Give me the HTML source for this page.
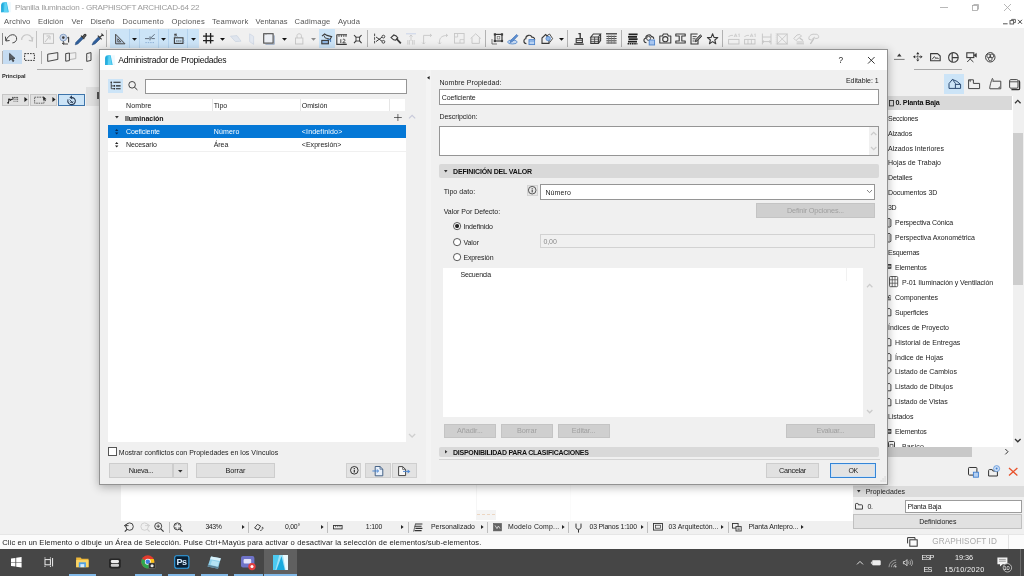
<!DOCTYPE html>
<html><head><meta charset="utf-8">
<style>
*{box-sizing:border-box;margin:0;padding:0}
html,body{width:1024px;height:576px;overflow:hidden;background:#f0f0f0}
body{font-family:"Liberation Sans",sans-serif;font-size:7px;color:#1c1c1c;position:relative}
#w{position:absolute;left:0;top:0;width:1024px;height:576px;will-change:transform}
.a{position:absolute}
.t{position:absolute;white-space:nowrap;line-height:1}
svg{position:absolute;overflow:visible;fill:none;stroke:#3c3c3c;stroke-width:1}
</style></head><body><div id="w">
<div class="a" style="left:0px;top:0px;width:1024px;height:28px;background:#fff;"></div>
<svg style="left:1.3px;top:2.4px;" width="10.3" height="10.3" viewBox="0 0 10 10"><path d="M.3 10V2.6C.3 1 1.4 .2 3 .2H9.8V10Z" fill="#eef9fe" stroke="none"/><path d="M.3 10V2.6C.3 1 1.4 .2 3 .2H5.6L7.6 10Z" fill="#2fb8e6" stroke="none"/><path d="M3.4 1L5.2 .6L6.8 10H2.8Z" fill="#5fd2f3" stroke="none"/><path d="M.3 10V3L1.6 1L1.2 10Z" fill="#1b9fd3" stroke="none"/></svg>
<div class="t" style="left:15.00px;top:3.74px;font-size:8.1px;letter-spacing:-0.242px;color:#9b9b9b;">Planilla Iluminacion - GRAPHISOFT ARCHICAD-64 22</div>
<svg style="left:940px;top:7px;" width="8" height="1" viewBox="0 0 8 1"><path d="M0 .5H8" stroke="#a6a6a6" stroke-width=".8"/></svg>
<svg style="left:972px;top:3.5px;" width="7" height="7" viewBox="0 0 7 7"><rect x=".5" y="1.5" width="5" height="5" stroke="#a6a6a6" stroke-width=".8"/><path d="M1.8 1.5V.5H6.5V5.2H5.5" stroke="#a6a6a6" stroke-width=".8"/></svg>
<svg style="left:1003.5px;top:3.5px;" width="7" height="7" viewBox="0 0 7 7"><path d="M0 0L7 7M7 0L0 7" stroke="#a6a6a6" stroke-width=".8"/></svg>
<div class="t" style="left:4.00px;top:18.07px;font-size:7.6px;letter-spacing:0.166px;color:#565656;">Archivo</div>
<div class="t" style="left:38.00px;top:18.07px;font-size:7.6px;letter-spacing:0.082px;color:#565656;">Edición</div>
<div class="t" style="left:71.50px;top:18.07px;font-size:7.6px;letter-spacing:0.031px;color:#565656;">Ver</div>
<div class="t" style="left:90.50px;top:18.07px;font-size:7.6px;letter-spacing:0.057px;color:#565656;">Diseño</div>
<div class="t" style="left:122.50px;top:18.07px;font-size:7.6px;letter-spacing:0.293px;color:#565656;">Documento</div>
<div class="t" style="left:171.50px;top:18.07px;font-size:7.6px;letter-spacing:0.174px;color:#565656;">Opciones</div>
<div class="t" style="left:212.00px;top:18.07px;font-size:7.6px;letter-spacing:0.234px;color:#565656;">Teamwork</div>
<div class="t" style="left:255.50px;top:18.07px;font-size:7.6px;letter-spacing:0.038px;color:#565656;">Ventanas</div>
<div class="t" style="left:294.50px;top:18.07px;font-size:7.6px;letter-spacing:0.170px;color:#565656;">Cadimage</div>
<div class="t" style="left:338.00px;top:18.07px;font-size:7.6px;letter-spacing:0.118px;color:#565656;">Ayuda</div>
<svg style="left:1002.5px;top:19px;" width="20" height="6" viewBox="0 0 20 6"><path d="M0 4.8H4.6" stroke="#555" stroke-width="1"/><rect x="7" y="1.6" width="3.6" height="3.4" stroke="#555" stroke-width=".9"/><path d="M8.6 1.4V.4H12.4V3.6H10.8" stroke="#555" stroke-width=".9"/><path d="M15 .8L19 4.8M19 .8L15 4.8" stroke="#444" stroke-width="1"/></svg>
<div class="a" style="left:2.1px;top:33px;width:0.8px;height:11.6px;background:#8a8a8a;"></div>
<svg style="left:5px;top:33px;" width="12" height="11" viewBox="0 0 12 11"><path d="M1 7.8C2 4.4 4.5 1.9 7.5 1.7C10.5 1.6 12 4 11.6 6.4C11.2 8.4 9.6 9.7 7.4 9.9" stroke="#444" stroke-width="1"/><path d="M0.4 3.6L0.9 8L4.6 7.5" stroke="#444" stroke-width="1"/></svg>
<svg style="left:21.3px;top:33px;" width="12" height="11" viewBox="0 0 12 11"><path d="M0.7 7C0.4 3.6 3.6 1.5 6.4 1.7C9.4 1.9 11 4.6 11.3 7.6" stroke="#c6c6c6" stroke-width="1.1"/><path d="M11.8 4L11.4 8L7.8 7.4" stroke="#c6c6c6" stroke-width="1.1"/></svg>
<div class="a" style="left:36.4px;top:30.5px;width:1.1px;height:17px;background:#c2c2c2;"></div>
<svg style="left:42.5px;top:33px;" width="11" height="11" viewBox="0 0 11 11"><rect x=".5" y=".8" width="10" height="9.6" stroke="#c2c2c2"/><path d="M2 9L6 4M3.5 3H7V6.5" stroke="#c2c2c2"/></svg>
<svg style="left:59px;top:32.5px;" width="12" height="12" viewBox="0 0 12 12"><circle cx="4.3" cy="4.6" r="3.4" stroke="#8aa4c8" fill="#c9d6ea"/><circle cx="4.3" cy="4.6" r="1.3" fill="#3a3a3a" stroke="none"/><path d="M4.3 8V11H9M3 10L4.3 11.2L5.6 10" stroke="#3a3a3a" stroke-width=".9"/><path d="M9.6 4.2V9.5M8.4 5.2L9.6 4" stroke="#3a3a3a" stroke-width="1.1"/></svg>
<svg style="left:74px;top:32.5px;" width="13" height="13" viewBox="0 0 13 13"><path d="M1.2 11.8L2 9.2L7.6 3.6L9.4 5.4L3.8 11Z" fill="#2f5f9c" stroke="#274b7c" stroke-width=".6"/><path d="M7 2.6L10.4 6M8.4 4.2L10.6 1.6C11.4 1 12.4 2 11.6 2.8L9.6 5" stroke="#3a3a3a" stroke-width="1.3"/></svg>
<svg style="left:90.5px;top:32.5px;" width="13" height="13" viewBox="0 0 13 13"><path d="M1 12L2.4 9L7.8 3.6L9.6 5.4L4.2 10.8Z" fill="#2f5f9c" stroke="#274b7c" stroke-width=".6"/><path d="M6.8 2.6L10.6 6.4M8.8 4.4L11.6 1.6M10.4 .6L12.6 2.8" stroke="#3a3a3a" stroke-width="1.2"/></svg>
<div class="a" style="left:106.0px;top:30px;width:1px;height:17px;background:#b2b2b2;"></div>
<div class="a" style="left:110.25px;top:29.25px;width:88.5px;height:18.5px;background:#cce4f7;"></div>
<div class="a" style="left:129.0px;top:29.25px;width:0.8px;height:18.5px;background:#b4d3ee;"></div>
<div class="a" style="left:139.35px;top:29.25px;width:0.8px;height:18.5px;background:#b4d3ee;"></div>
<div class="a" style="left:158.1px;top:29.25px;width:0.8px;height:18.5px;background:#b4d3ee;"></div>
<div class="a" style="left:168.1px;top:29.25px;width:0.8px;height:18.5px;background:#b4d3ee;"></div>
<div class="a" style="left:187.1px;top:29.25px;width:0.8px;height:18.5px;background:#b4d3ee;"></div>
<svg style="left:114px;top:33px;" width="12" height="12" viewBox="0 0 12 12"><path d="M1.6 1.2V10.8H11Z" stroke="#4a4a4a" stroke-width="1" fill="#b4c8de"/><path d="M3.8 5.8V8.8H6.8Z" stroke="#3a3a3a" stroke-width=".8" fill="#cce4f7"/></svg>
<svg style="left:132.0px;top:37.8px;" width="5" height="3" viewBox="0 0 5 3"><path d="M0 0H5L2.5 2.8Z" fill="#111" stroke="none"/></svg>
<svg style="left:144px;top:33px;" width="12" height="12" viewBox="0 0 12 12"><path d="M1 5.6H5M6.2 5.6L10.6 1.2M6 3.4V7.4M7.4 5.6H10.8" stroke="#54606e" stroke-width=".9"/><path d="M1.4 9.6H10.6" stroke="#8fb0d6" stroke-width="1" stroke-dasharray="1.4 1"/></svg>
<svg style="left:161.1px;top:37.8px;" width="5" height="3" viewBox="0 0 5 3"><path d="M0 0H5L2.5 2.8Z" fill="#111" stroke="none"/></svg>
<svg style="left:173px;top:33px;" width="13" height="12" viewBox="0 0 13 12"><rect x="1.4" y="4.8" width="8.6" height="5.6" stroke="#3a3a3a" stroke-width="1.1"/><path d="M2 1.2L4 3.4M2 1V3.6M1.4 1.2H4" stroke="#3a3a3a" stroke-width=".9"/><path d="M3.2 8H8.4" stroke="#3a3a3a" stroke-width="1.2" stroke-dasharray="1.3 .7"/><path d="M10.8 7V10.4" stroke="#7d9cc4" stroke-width=".9" stroke-dasharray="1 .8"/></svg>
<svg style="left:190.5px;top:37.8px;" width="5" height="3" viewBox="0 0 5 3"><path d="M0 0H5L2.5 2.8Z" fill="#111" stroke="none"/></svg>
<svg style="left:203px;top:33.4px;" width="10.6" height="10.6" viewBox="0 0 10.6 10.6"><path d="M3.2 0V10.6M7.6 0V10.6M0 3.2H10.6M0 7.6H10.6" stroke="#1e1e1e" stroke-width="1.3"/></svg>
<svg style="left:220.0px;top:37.8px;" width="5" height="3" viewBox="0 0 5 3"><path d="M0 0H5L2.5 2.8Z" fill="#111" stroke="none"/></svg>
<svg style="left:229.75px;top:35px;" width="12" height="8" viewBox="0 0 12 8"><path d="M.5 1.2L7 .6L11 6.2L5.4 6.6Z" fill="#dfe5ee" stroke="#c9d2e0" stroke-width=".7"/></svg>
<svg style="left:249px;top:32.5px;" width="6" height="12" viewBox="0 0 6 12"><path d="M.6 .8L4.6 3.4V11.4L.6 8.6Z" fill="#e3e8f0" stroke="#ccd4e2" stroke-width=".7"/></svg>
<svg style="left:263.25px;top:33px;" width="12" height="12" viewBox="0 0 12 12"><path d="M2.4 11.3H11.3V2.4" stroke="#93a6c4" stroke-width=".9"/><rect x=".7" y=".7" width="9.4" height="9.4" stroke="#4c4c4c" stroke-width="1.1" fill="#eceff4"/><path d="M1.4 2.6V1.4H4" stroke="#9a9a9a" stroke-width=".6"/></svg>
<svg style="left:281.5px;top:37.8px;" width="5" height="3" viewBox="0 0 5 3"><path d="M0 0H5L2.5 2.8Z" fill="#111" stroke="none"/></svg>
<svg style="left:295px;top:33.2px;" width="8.4" height="11.6" viewBox="0 0 8.4 11.6"><rect x=".5" y="5" width="7.4" height="6" stroke="#c4c4c4" stroke-width=".9"/><path d="M2 5V2.6C2 .2 6.4 .2 6.4 2.6V5" stroke="#c4c4c4" stroke-width=".9"/></svg>
<svg style="left:310.8px;top:37.8px;" width="5" height="3" viewBox="0 0 5 3"><path d="M0 0H5L2.5 2.8Z" fill="#8c8c8c" stroke="none"/></svg>
<div class="a" style="left:318.5px;top:29.25px;width:16px;height:18.5px;background:#cce4f7;"></div>
<svg style="left:320.6px;top:33.2px;" width="11.5" height="11.5" viewBox="0 0 11.5 11.5"><path d="M1 3.2L3.6 1L6 2.4L10.6 3.6L8.6 7.2" stroke="#3a3a3a" stroke-width="1.1"/><path d="M3 2.6L4.2 5L8.4 6" stroke="#3a3a3a" stroke-width=".9"/><rect x=".8" y="7.4" width="6.6" height="3.4" stroke="#3a3a3a" stroke-width="1.1" fill="#8db4e0"/><path d="M6.4 6.4H9.6V9" stroke="#3f6fae" stroke-width=".9"/></svg>
<svg style="left:336.25px;top:33.5px;" width="11.5" height="11" viewBox="0 0 11.5 11"><path d="M.6 .8H11M.8 .8V10.4H10.8" stroke="#3a3a3a" stroke-width="1.1"/><path d="M3 .8V3M5.4 .8V3M7.8 .8V3M10 .8V3" stroke="#3a3a3a" stroke-width=".8"/><path d="M4.8 5.2V9M6.8 5.6C8 4.6 9.6 5.6 8.6 6.8L6.8 8.8H9.6" stroke="#3a3a3a" stroke-width=".9"/></svg>
<svg style="left:354.4px;top:34.6px;" width="7.6" height="8.2" viewBox="0 0 7.6 8.2"><rect x="2" y="2.2" width="3.6" height="3.8" stroke="#3a3a3a" stroke-width=".9"/><path d="M0 0L2 2.2M7.6 0L5.6 2.2M0 8.2L2 6M7.6 8.2L5.6 6" stroke="#3a3a3a" stroke-width="1.1"/></svg>
<div class="a" style="left:367.0px;top:30px;width:1px;height:17.200000000000003px;background:#b2b2b2;"></div>
<svg style="left:373.75px;top:33px;" width="11.5" height="12" viewBox="0 0 11.5 12"><path d="M.6 .6V11.4" stroke="#3a3a3a" stroke-width=".9" stroke-dasharray="2.6 1"/><path d="M2 4L8 8.2M2 8.6L8 4.2" stroke="#3a3a3a" stroke-width="1"/><circle cx="9.4" cy="3.6" r="1.4" stroke="#3a3a3a" stroke-width=".9"/><circle cx="9.4" cy="8.8" r="1.4" stroke="#3a3a3a" stroke-width=".9"/></svg>
<svg style="left:389.75px;top:33px;" width="11.5" height="12" viewBox="0 0 11.5 12"><path d="M1 4.6L3.8 2L6.2 3L7.8 5L5.6 7.2L3.6 6.8Z" stroke="#3a3a3a" stroke-width="1.1"/><path d="M6.4 5.6L10.8 10.4" stroke="#3a3a3a" stroke-width="1.7"/></svg>
<svg style="left:406.25px;top:33px;" width="10" height="12" viewBox="0 0 10 12"><path d="M0 .8H10" stroke="#c9d3e8" stroke-width="1"/><path d="M5 2V8M3.4 3.6L5 2L6.6 3.6M1.8 7V11.6M3.4 7V11.6M6.6 7V11.6M8.2 7V11.6" stroke="#c6c6c6" stroke-width=".8"/></svg>
<svg style="left:421.9px;top:33px;" width="10" height="12" viewBox="0 0 10 12"><path d="M1.6 11V2.4H9.4M8 1L9.6 2.4L8 3.8M.2 9.6L1.6 11L3 9.6" stroke="#c6c6c6" stroke-width=".9"/></svg>
<svg style="left:437.5px;top:33px;" width="10" height="12" viewBox="0 0 10 12"><path d="M1.6 11V8C1.6 4.6 4.6 2.4 9.4 2.4M8 1L9.6 2.4L8 3.8M.2 9.6L1.6 11L3 9.6" stroke="#c6c6c6" stroke-width=".9"/></svg>
<svg style="left:454.4px;top:33.4px;" width="10.6" height="10.6" viewBox="0 0 10.6 10.6"><rect x=".5" y=".5" width="9.6" height="9.6" stroke="#c6c6c6" stroke-width=".9"/><path d="M3.6 .5V4H.5M6 10V6.6H10" stroke="#c6c6c6" stroke-width=".8"/></svg>
<svg style="left:470px;top:33.4px;" width="11.4" height="11" viewBox="0 0 11.4 11"><path d="M.6 5.6L5.7 .8L10.8 5.6M2 4.6V10.4H9.4V4.6" stroke="#c6c6c6" stroke-width=".9"/></svg>
<div class="a" style="left:484.5px;top:30px;width:1px;height:17.200000000000003px;background:#b2b2b2;"></div>
<svg style="left:490.6px;top:33px;" width="12.4" height="12" viewBox="0 0 12.4 12"><rect x="4" y="1.4" width="7" height="6.6" stroke="#3a3a3a" stroke-width="1.2"/><rect x="2.8" y=".3" width="2.2" height="2.2" fill="#3a3a3a" stroke="none"/><rect x="9.9" y=".3" width="2.2" height="2.2" fill="#3a3a3a" stroke="none"/><rect x="2.8" y="6.9" width="2.2" height="2.2" fill="#3a3a3a" stroke="none"/><rect x="9.9" y="6.9" width="2.2" height="2.2" fill="#3a3a3a" stroke="none"/><rect x="6.2" y="3.6" width="2.6" height="2.4" stroke="#777" stroke-width=".7"/><path d="M1 6V11H6" stroke="#555" stroke-width=".8"/></svg>
<svg style="left:506.9px;top:33px;" width="12" height="12" viewBox="0 0 12 12"><ellipse cx="5.4" cy="9" rx="4.8" ry="2" stroke="#5b8ed0" stroke-width=".9" fill="#c7daf2"/><path d="M3 9.6L4 7L9.6 1.4L11 2.8L5.4 8.6Z" fill="#5b8ed0" stroke="#3a6bb0" stroke-width=".6"/></svg>
<svg style="left:523px;top:32.6px;" width="12.4" height="12.4" viewBox="0 0 12.4 12.4"><path d="M3.4 10.6C.2 10.6 .2 6.2 2.8 5.8C2.6 2 8 1 8.8 4.2C11.6 3.8 12.4 7 11 8" stroke="#3a3a3a" stroke-width="1.1"/><rect x="6" y="6.6" width="5.6" height="5" fill="#bcd6f5" stroke="#4f86d0" stroke-width=".9"/><path d="M6 8H11.6" stroke="#4f86d0" stroke-width=".8"/></svg>
<svg style="left:540.6px;top:33px;" width="12.4" height="12" viewBox="0 0 12.4 12"><path d="M1 10.4V5L4.6 1.6L8 4.6V10.4Z" stroke="#3a3a3a" stroke-width="1.1"/><path d="M5 3.4L8.6 1L11.6 5.6L8.6 9.6" stroke="#3a3a3a" stroke-width=".9"/><circle cx="7.2" cy="5.6" r="2.2" fill="#8db4e6" stroke="#4f86d0" stroke-width=".8"/></svg>
<svg style="left:558.8px;top:37.8px;" width="5" height="3" viewBox="0 0 5 3"><path d="M0 0H5L2.5 2.8Z" fill="#111" stroke="none"/></svg>
<div class="a" style="left:567.0px;top:30px;width:1px;height:17.200000000000003px;background:#b2b2b2;"></div>
<svg style="left:574.4px;top:33px;" width="10.4" height="12" viewBox="0 0 10.4 12"><path d="M4.4 .6H6.2V5.4" stroke="#3a3a3a" stroke-width="1.4"/><path d="M2.2 5.6H8.4V9.6H2.2Z" stroke="#3a3a3a" stroke-width="1.1"/><path d="M.2 11.2H9.8" stroke="#3a3a3a" stroke-width="1.2"/><path d="M2.2 7.4H8.4" stroke="#3a3a3a" stroke-width=".8"/></svg>
<svg style="left:590px;top:33.4px;" width="11.4" height="11" viewBox="0 0 11.4 11"><path d="M.8 4L3.4 1H10.6L8.4 4Z M.8 4V10.4H8.4V4 M8.4 10.4L10.6 7.6V1" stroke="#3a3a3a" stroke-width="1.1"/><path d="M.8 6.2H8.4M.8 8.4H8.4M4.6 4V10.4M8.4 6.2L10.6 3.4M8.4 8.4L10.6 5.6" stroke="#3a3a3a" stroke-width=".8"/></svg>
<svg style="left:606px;top:33.4px;" width="11" height="11" viewBox="0 0 11 11"><path d="M0 .8H11" stroke="#3a3a3a" stroke-width="1.3"/><path d="M.4 3.4H10.6M.4 5.6H10.6M.4 7.8H10.6M.4 10H10.6" stroke="#3a3a3a" stroke-width="1"/><path d="M2.6 2.4V10.6M5.4 2.4V10.6M8.2 2.4V10.6" stroke="#777" stroke-width=".7"/></svg>
<div class="a" style="left:620.7px;top:30px;width:1px;height:17.200000000000003px;background:#b2b2b2;"></div>
<svg style="left:627px;top:33px;" width="11" height="12" viewBox="0 0 11 12"><path d="M1.6 1.4H10.6M1 3.8H10M1.6 6.2H10.6M1 8.6H10" stroke="#222" stroke-width="1.7"/><path d="M.6 10.8H10.4" stroke="#222" stroke-width="1.6" stroke-dasharray="1.6 .6"/></svg>
<svg style="left:642.9px;top:32.6px;" width="12.2" height="12.4" viewBox="0 0 12.2 12.4"><path d="M3.4 9.6C.2 9.6 .2 5.6 2.8 5.2C2.6 1.6 7.6 .8 8.4 3.6C10.2 3.4 11 5 10.6 6" stroke="#3a3a3a" stroke-width="1.1"/><circle cx="5.6" cy="5.4" r="2" stroke="#3a3a3a" stroke-width=".9"/><rect x="6.2" y="7" width="5.4" height="5" fill="#a9c8f2" stroke="#4f86d0" stroke-width=".9"/></svg>
<svg style="left:658.5px;top:33.4px;" width="12.6" height="11" viewBox="0 0 12.6 11"><path d="M.8 3H3.4L4.4 1H8.4L9.4 3H11.8V10H.8Z" stroke="#3a3a3a" stroke-width="1.1" stroke-linejoin="round"/><circle cx="6.3" cy="6.2" r="2.6" stroke="#3a3a3a" stroke-width="1.1"/></svg>
<svg style="left:675px;top:33.4px;" width="11" height="11" viewBox="0 0 11 11"><path d="M.8 1H10.2V3H6.8V8H10.2V10H.8V8H4.2V3H.8Z" stroke="#3a3a3a" stroke-width="1.1" stroke-linejoin="round"/></svg>
<svg style="left:690.4px;top:33px;" width="12" height="12" viewBox="0 0 12 12"><path d="M7.6 1H1V11H8V7" stroke="#3a3a3a" stroke-width="1.1"/><path d="M2.6 3.6H6.6M2.6 5.8H5.6M2.6 8H4.6" stroke="#3a3a3a" stroke-width=".9"/><path d="M5.2 8.8L6 6.4L10.4 1.8L11.8 3.2L7.4 7.8Z" stroke="#3a3a3a" stroke-width="1" fill="#888"/></svg>
<svg style="left:707.25px;top:33px;" width="11.2" height="11.4" viewBox="0 0 11.2 11.4"><path d="M5.6 .8L7 4.4L10.8 4.6L7.8 7L8.8 10.8L5.6 8.6L2.4 10.8L3.4 7L.4 4.6L4.2 4.4Z" stroke="#3a3a3a" stroke-width="1.1" stroke-linejoin="round"/></svg>
<div class="a" style="left:722.0px;top:30px;width:1px;height:17.200000000000003px;background:#b2b2b2;"></div>
<svg style="left:727.75px;top:33px;" width="11.6" height="12" viewBox="0 0 11.6 12"><path d="M.4 3.6L3 2.4H5" stroke="#c4c4c4" stroke-width=".8"/><path d="M6.2 4L7.6 .8L9 4M6.6 3H8.6M10.4 1.4L11.2 .8V4" stroke="#c4c4c4" stroke-width=".7"/><rect x=".6" y="6.4" width="10.4" height="4.6" stroke="#c4c4c4" stroke-width=".9"/></svg>
<svg style="left:743.75px;top:33px;" width="11.6" height="12" viewBox="0 0 11.6 12"><path d="M.4 3.6L3 2.4H5" stroke="#c4c4c4" stroke-width=".8"/><path d="M6.2 4L7.6 .8L9 4M6.6 3H8.6M10.4 1.4L11.2 .8V4" stroke="#c4c4c4" stroke-width=".7"/><rect x=".6" y="6.4" width="10.4" height="4.6" stroke="#c4c4c4" stroke-width=".9"/><path d="M4 6.4V11M7.4 6.4V11" stroke="#c4c4c4" stroke-width=".8"/></svg>
<svg style="left:760.6px;top:33px;" width="11.4" height="12" viewBox="0 0 11.4 12"><path d="M1.4 .6V11.4M10 .6V11.4M1.4 4H10M1.4 8.6H10M3 7.6L1.6 8.6L3 9.6M8.4 7.6L9.8 8.6L8.4 9.6" stroke="#c4c4c4" stroke-width=".9"/></svg>
<svg style="left:776.25px;top:33px;" width="11.8" height="12" viewBox="0 0 11.8 12"><rect x="1.2" y="1" width="10" height="10" stroke="#c4c4c4" stroke-width=".9"/><path d="M1.2 1L11.2 11M11.2 1L1.2 11" stroke="#c4c4c4" stroke-width=".8"/><path d="M.2 .4V11.6" stroke="#c4c4c4" stroke-width=".6" stroke-dasharray="1 1"/></svg>
<svg style="left:792.5px;top:33px;" width="11.4" height="12" viewBox="0 0 11.4 12"><path d="M.8 5.4L4 2L6.8 1.4L8.6 3.2L6.4 4.4L3 7.6Z" stroke="#c4c4c4" stroke-width=".9"/><path d="M6.6 5L10 7.4" stroke="#c4c4c4" stroke-width="1.2"/><path d="M3.6 9H11M3.6 10.8H11" stroke="#c4c4c4" stroke-width=".9"/></svg>
<svg style="left:808px;top:33px;" width="11.6" height="12" viewBox="0 0 11.6 12"><path d="M1 6.4C0 2 5 .6 7 1.4C9.6 .6 11.4 3 10.4 5L7.6 5.6L6.4 4.2L3.4 7Z" stroke="#c4c4c4" stroke-width=".9"/><path d="M6.2 5.2L2.4 10.8" stroke="#c4c4c4" stroke-width="1.3"/></svg>
<div class="a" style="left:2.0px;top:51px;width:1px;height:13px;background:#b0b0b0;"></div>
<div class="a" style="left:2.9px;top:50.3px;width:19px;height:14px;background:#c5dcf2;"></div>
<svg style="left:8.6px;top:53.4px;" width="7" height="9" viewBox="0 0 7 9"><path d="M.6 .4V7.4L2.4 5.8L3.8 8.6L5 8L3.6 5.4H6Z" fill="#5a5f66" stroke="#2e2e2e" stroke-width=".7" stroke-linejoin="round"/></svg>
<svg style="left:24px;top:53px;" width="11" height="8" viewBox="0 0 11 8"><rect x=".6" y=".6" width="9.8" height="6.8" stroke="#222" stroke-width=".9" stroke-dasharray="1.7 1"/></svg>
<div class="a" style="left:40.8px;top:51px;width:1px;height:12.600000000000001px;background:#b0b0b0;"></div>
<svg style="left:47.25px;top:52.4px;" width="11.5" height="10" viewBox="0 0 11.5 10"><path d="M.7 2.2L10.8 .6V7.4L.7 9.4Z" stroke="#3c3c3c" stroke-width=".95" stroke-linejoin="round"/></svg>
<svg style="left:65px;top:52.4px;" width="11.5" height="10" viewBox="0 0 11.5 10"><path d="M4.4 1.4L10.8 .6V6.6L4.4 7.6" stroke="#a6a6a6" stroke-width=".8"/><path d="M.7 1.6L4.4 1V8.6L.7 9.2Z" stroke="#3c3c3c" stroke-width=".95" stroke-linejoin="round"/></svg>
<svg style="left:86.25px;top:52.4px;" width="6" height="10" viewBox="0 0 6 10"><path d="M.7 1.6L5 .6V8.4L.7 9.4Z" stroke="#3c3c3c" stroke-width=".95" stroke-linejoin="round"/><path d="M2 5H2.2" stroke="#2a2a2a" stroke-width="1"/></svg>
<div class="a" style="left:37px;top:68.9px;width:46px;height:0.9px;background:#a9a9a9;"></div>
<div class="t" style="left:1.90px;top:73.77px;font-size:5.7px;letter-spacing:-0.042px;color:#2a2a2a;font-weight:bold;">Principal</div>
<div class="a" style="left:2.25px;top:94.25px;width:26.25px;height:11.25px;background:#e1e1e1;border:1px solid #c6c6c6;"></div>
<div class="a" style="left:30px;top:94.25px;width:26.5px;height:11.25px;background:#e1e1e1;border:1px solid #c6c6c6;"></div>
<div class="a" style="left:58.1px;top:94.25px;width:27px;height:11.25px;background:#cce4f7;border:1px solid #3d74aa;"></div>
<svg style="left:7px;top:96px;" width="12" height="8" viewBox="0 0 12 8"><path d="M1.2 7L2 3.4M2 3.4H5.6M2.6 5L6.6 2.2" stroke="#222" stroke-width=".9"/><rect x=".4" y="6" width="1.6" height="1.6" fill="#222" stroke="none"/><rect x="1.2" y="2.6" width="1.6" height="1.6" fill="#222" stroke="none"/><path d="M5 1.4H11M7 1.4V5.6M9 1.4V5.6M10.6 1.4V5.6" stroke="#222" stroke-width=".8" stroke-dasharray="1 .8"/></svg>
<svg style="left:23.6px;top:97.4px;" width="3.6" height="5" viewBox="0 0 3.6 5"><path d="M.4 0V5L3.6 2.5Z" fill="#222" stroke="none"/></svg>
<svg style="left:34.4px;top:96px;" width="13" height="8" viewBox="0 0 13 8"><rect x=".6" y="1.2" width="9.4" height="6" stroke="#333" stroke-width=".7" stroke-dasharray="1.6 .8"/><path d="M9.2 .2V4.6L10.3 3.6L11.1 5.2L11.9 4.8L11.1 3.2H12.6Z" fill="#222" stroke="none"/></svg>
<svg style="left:52px;top:97.4px;" width="3.6" height="5" viewBox="0 0 3.6 5"><path d="M.4 0V5L3.6 2.5Z" fill="#222" stroke="none"/></svg>
<svg style="left:66.4px;top:94.6px;" width="11" height="11" viewBox="0 0 11 11"><path d="M2 4.4C1 7.4 3.4 9.9 6 9.6C9.2 9.2 10.4 5.6 8.4 3.6C7.6 2.8 6.6 2.5 5.6 2.6" stroke="#2b3c55" stroke-width="1.1"/><path d="M5.9 .2L3.4 2.4L6.2 4.4Z" fill="#2b3c55" stroke="none"/><path d="M3.6 4.6L7 8M3.8 6.8C5 8 6.6 7.8 7.2 6.4" stroke="#2b3c55" stroke-width=".9"/></svg>
<div class="a" style="left:86.4px;top:87px;width:13.3px;height:18.5px;background:#e0e0e0;"></div>
<div class="a" style="left:97.4px;top:91.75px;width:1.7px;height:7.5px;background:#555;"></div>
<svg style="left:894px;top:53px;" width="10.6" height="8" viewBox="0 0 10.6 8"><path d="M5.3 .6L7.6 3.4H3Z" fill="#3a3a3a" stroke="none"/><path d="M0 6.4H10.6" stroke="#777" stroke-width="1"/></svg>
<svg style="left:912.6px;top:52.3px;" width="9.6" height="9.6" viewBox="0 0 9.6 9.6"><path d="M4.8 0L6.4 2.2H3.2ZM4.8 9.6L6.4 7.4H3.2ZM0 4.8L2.2 3.2V6.4ZM9.6 4.8L7.4 3.2V6.4Z" fill="#2a2a2a" stroke="none"/><path d="M4.8 2.6V7M2.6 4.8H7" stroke="#2a2a2a" stroke-width=".9" stroke-dasharray="1.1 .6"/></svg>
<svg style="left:930.4px;top:52.9px;" width="10.8" height="8.4" viewBox="0 0 10.8 8.4"><path d="M.6 .6H7.6L10.2 3V7.8H.6Z" stroke="#3a3a3a" stroke-width="1.1" stroke-linejoin="round"/><path d="M2 6.4L4.4 3.6L5.6 5M5 6.2C6 4.6 8 4.6 9 6.2" stroke="#3a3a3a" stroke-width=".9"/></svg>
<svg style="left:948.2px;top:51.8px;" width="10.8" height="10.8" viewBox="0 0 10.8 10.8"><circle cx="5.4" cy="5.4" r="4.8" stroke="#3a3a3a" stroke-width="1.1"/><path d="M4.2 .8V10M4.2 5.6H10.2" stroke="#3a3a3a" stroke-width="1.1"/></svg>
<svg style="left:966px;top:52.2px;" width="11" height="10.4" viewBox="0 0 11 10.4"><rect x=".8" y=".8" width="7" height="4.8" stroke="#3a3a3a" stroke-width="1.1"/><path d="M7.8 3.2L10.4 1.4V5.2Z" fill="#3a3a3a" stroke="#3a3a3a" stroke-width=".6"/><path d="M4.2 5.6V7M4.2 7L1.2 10M4.2 7L7.4 10" stroke="#3a3a3a" stroke-width="1"/></svg>
<svg style="left:984.8px;top:52px;" width="10.6" height="10.6" viewBox="0 0 10.6 10.6"><circle cx="5.3" cy="5.3" r="4.7" stroke="#3a3a3a" stroke-width="1"/><circle cx="3.8" cy="4" r="1.9" stroke="#3a3a3a" stroke-width=".8"/><circle cx="6.8" cy="4" r="1.9" stroke="#3a3a3a" stroke-width=".8"/><circle cx="5.3" cy="6.8" r="1.9" stroke="#3a3a3a" stroke-width=".8"/></svg>
<div class="a" style="left:913.75px;top:69px;width:48.5px;height:0.9px;background:#a9a9a9;"></div>
<div class="a" style="left:121px;top:480px;width:731.5px;height:41px;background:#fff;"></div>
<div class="a" style="left:476px;top:484px;width:0.7px;height:26px;background:#f6f6f6;"></div>
<div class="a" style="left:569.5px;top:484px;width:0.7px;height:37px;background:#fbfbfb;"></div>
<div class="a" style="left:475.6px;top:509.7px;width:20.4px;height:10.2px;background:#f4f4f4;"></div>
<div class="a" style="left:477px;top:513.6px;width:18px;height:0;border-top:.8px dashed #ecd6c2"></div>
<div class="a" style="left:944.3px;top:74px;width:19.8px;height:19.8px;background:#cce4f7;"></div>
<svg style="left:948px;top:78px;" width="14" height="12" viewBox="0 0 14 12"><path d="M1 10.4V5.6L4.4 1.4L7.4 5.4V10.4M4.4 1.4L9 3.4L12.6 6.4V10.4H1M7.4 6.4H12.6" stroke="#2c4a72" stroke-width="1" stroke-linejoin="round" fill="none"/></svg>
<svg style="left:968px;top:79px;" width="12.4" height="10.4" viewBox="0 0 12.4 10.4"><path d="M.6 9.6V.8H5.4V4.4H11.6V9.6Z" stroke="#444" stroke-width="1" stroke-linejoin="round"/><path d="M2.4 .8V2.6L.8 1.2" stroke="#444" stroke-width=".7"/></svg>
<svg style="left:988.8px;top:78.4px;" width="12.4" height="11.6" viewBox="0 0 12.4 11.6"><path d="M3.8 3.2H11.8V10.8H1" stroke="#444" stroke-width="1" stroke-linejoin="round"/><path d="M3.4 .4C2 3.4 1 7 .6 10.8M3.4 .4C4.2 1 4.2 2.4 3.8 3.4" stroke="#444" stroke-width=".9"/><path d="M8.4 10.6L11.6 7.4V10.6Z" fill="#777" stroke="none"/></svg>
<svg style="left:1009px;top:79px;" width="11.4" height="11.2" viewBox="0 0 11.4 11.2"><rect x=".6" y=".6" width="8.4" height="8.6" rx="1.2" stroke="#444" stroke-width="1"/><path d="M.8 2.8H8.8" stroke="#444" stroke-width=".9"/><path d="M9.6 1.6C10.4 1.8 10.6 2.2 10.6 3V9.4C10.6 10.2 10 10.6 9.2 10.6H2.4" stroke="#333" stroke-width="1.3"/></svg>
<div class="a" style="left:880px;top:95.8px;width:133px;height:351.3px;background:#fff;"></div>
<div class="a" style="left:880px;top:95.8px;width:132.4px;height:14.4px;background:#d9d9d9;"></div>
<svg style="left:888.6px;top:100px;" width="5" height="6.4" viewBox="0 0 5 6.4"><rect x=".5" y=".5" width="4" height="5.4" stroke="#333" stroke-width=".9"/></svg>
<div class="t" style="left:895.40px;top:99.41px;font-size:7.2px;letter-spacing:-0.180px;color:#111;font-weight:bold;">0. Planta Baja</div>
<svg style="left:1015.2px;top:99.8px;" width="5.6" height="3.2" viewBox="0 0 5.6 3.2"><path d="M0 3.2L2.8 .4L5.6 3.2" stroke="#333" stroke-width="1.3"/></svg>
<div class="a" style="left:1013.4px;top:132.7px;width:9.4px;height:152.2px;background:#cdcdcd;"></div>
<svg style="left:1015px;top:439px;" width="5.6" height="3.2" viewBox="0 0 5.6 3.2"><path d="M0 0L2.8 2.8L5.6 0" stroke="#333" stroke-width="1.3"/></svg>
<div class="t" style="left:888.00px;top:114.67px;font-size:7px;letter-spacing:-0.255px;color:#222;">Secciones</div>
<div class="t" style="left:888.00px;top:129.60px;font-size:7px;letter-spacing:-0.129px;color:#222;">Alzados</div>
<div class="t" style="left:888.00px;top:144.53px;font-size:7px;letter-spacing:-0.001px;color:#222;">Alzados Interiores</div>
<div class="t" style="left:888.00px;top:159.46px;font-size:7px;letter-spacing:0.005px;color:#222;">Hojas de Trabajo</div>
<div class="t" style="left:888.00px;top:174.39px;font-size:7px;letter-spacing:-0.111px;color:#222;">Detalles</div>
<div class="t" style="left:888.00px;top:189.32px;font-size:7px;letter-spacing:-0.076px;color:#222;">Documentos 3D</div>
<div class="t" style="left:888.00px;top:204.25px;font-size:7px;letter-spacing:-0.324px;color:#222;">3D</div>
<div class="t" style="left:895.10px;top:219.18px;font-size:7px;letter-spacing:-0.128px;color:#222;">Perspectiva Cónica</div>
<svg style="left:886.2px;top:217.70999999999998px;" width="5.5" height="9.6" viewBox="0 0 5.5 9.6"><path d="M1.5 .6H4L4.9 1.8V8.2L4 9H1.5" stroke="#333" stroke-width=".9"/><path d="M3.2 1.4V8.4" stroke="#555" stroke-width=".6"/></svg>
<div class="t" style="left:895.10px;top:234.11px;font-size:7px;letter-spacing:-0.047px;color:#222;">Perspectiva Axonométrica</div>
<svg style="left:886.2px;top:232.64px;" width="5.5" height="9.6" viewBox="0 0 5.5 9.6"><path d="M1.5 .6H4L4.9 1.8V8.2L4 9H1.5" stroke="#333" stroke-width=".9"/><path d="M3.2 1.4V8.4" stroke="#555" stroke-width=".6"/></svg>
<div class="t" style="left:888.00px;top:249.04px;font-size:7px;letter-spacing:-0.209px;color:#222;">Esquemas</div>
<div class="t" style="left:895.10px;top:263.97px;font-size:7px;letter-spacing:-0.163px;color:#222;">Elementos</div>
<svg style="left:886.4px;top:264.29999999999995px;" width="5.4" height="4.8" viewBox="0 0 5.4 4.8"><rect x=".5" y=".5" width="4.4" height="3.8" fill="#777" stroke="#333" stroke-width=".9"/><path d="M.5 2.4H4.9" stroke="#eee" stroke-width=".6"/></svg>
<div class="t" style="left:901.90px;top:278.90px;font-size:7px;letter-spacing:-0.073px;color:#222;">P-01 Iluminación y Ventilación</div>
<svg style="left:889px;top:276.13px;" width="9.2" height="11.2" viewBox="0 0 9.2 11.2"><rect x=".5" y=".5" width="8.2" height="10.2" rx="1" stroke="#4a4a4a" stroke-width=".9"/><path d="M.5 3.8H8.7M.5 7.2H8.7M3.3 .5V10.7M6 .5V10.7" stroke="#4a4a4a" stroke-width=".7"/></svg>
<div class="t" style="left:895.10px;top:293.83px;font-size:7px;letter-spacing:-0.071px;color:#222;">Componentes</div>
<svg style="left:886.2px;top:293.76px;" width="5.5" height="6.4" viewBox="0 0 5.5 6.4"><path d="M1 5.8H5M1 4H5M2.4 4V2.4L3.6 1L4.6 2.4" stroke="#333" stroke-width=".9"/></svg>
<div class="t" style="left:895.10px;top:308.76px;font-size:7px;letter-spacing:-0.148px;color:#222;">Superficies</div>
<svg style="left:886.2px;top:308.09px;" width="5.5" height="8.4" viewBox="0 0 5.5 8.4"><path d="M1.5 .6H3.8L4.9 1.8V7.8H1.5" stroke="#333" stroke-width=".9"/></svg>
<div class="t" style="left:888.00px;top:323.69px;font-size:7px;letter-spacing:-0.030px;color:#222;">Índices de Proyecto</div>
<div class="t" style="left:895.10px;top:338.62px;font-size:7px;letter-spacing:0.011px;color:#222;">Historial de Entregas</div>
<svg style="left:886.2px;top:337.94999999999993px;" width="5.5" height="8.4" viewBox="0 0 5.5 8.4"><path d="M1.5 .6H3.8L4.9 1.8V7.8H1.5" stroke="#333" stroke-width=".9"/></svg>
<div class="t" style="left:895.10px;top:353.55px;font-size:7px;letter-spacing:-0.003px;color:#222;">Índice de Hojas</div>
<svg style="left:886.2px;top:352.88px;" width="5.5" height="8.4" viewBox="0 0 5.5 8.4"><path d="M1.5 .6H3.8L4.9 1.8V7.8H1.5" stroke="#333" stroke-width=".9"/></svg>
<div class="t" style="left:895.10px;top:368.48px;font-size:7px;letter-spacing:-0.004px;color:#222;">Listado de Cambios</div>
<svg style="left:886.2px;top:367.40999999999997px;" width="5.5" height="8.4" viewBox="0 0 5.5 8.4"><path d="M1.4 .8C4 .6 5 2 5 3.4C5 5 4 6 2 6.4L1.4 8" stroke="#333" stroke-width=".9"/></svg>
<div class="t" style="left:895.10px;top:383.41px;font-size:7px;letter-spacing:0.017px;color:#222;">Listado de Dibujos</div>
<svg style="left:886.2px;top:382.74px;" width="5.5" height="8.4" viewBox="0 0 5.5 8.4"><path d="M1.5 .6H3.8L4.9 1.8V7.8H1.5" stroke="#333" stroke-width=".9"/></svg>
<div class="t" style="left:895.10px;top:398.34px;font-size:7px;letter-spacing:-0.040px;color:#222;">Listado de Vistas</div>
<svg style="left:886.2px;top:397.66999999999996px;" width="5.5" height="8.4" viewBox="0 0 5.5 8.4"><path d="M1.5 .6H3.8L4.9 1.8V7.8H1.5" stroke="#333" stroke-width=".9"/></svg>
<div class="t" style="left:888.00px;top:413.27px;font-size:7px;letter-spacing:-0.096px;color:#222;">Listados</div>
<div class="t" style="left:895.10px;top:428.20px;font-size:7px;letter-spacing:-0.163px;color:#222;">Elementos</div>
<svg style="left:886.4px;top:428.53px;" width="5.4" height="4.8" viewBox="0 0 5.4 4.8"><rect x=".5" y=".5" width="4.4" height="3.8" fill="#777" stroke="#333" stroke-width=".9"/><path d="M.5 2.4H4.9" stroke="#eee" stroke-width=".6"/></svg>
<svg style="left:888.4px;top:441px;" width="7" height="6" viewBox="0 0 7 6"><path d="M.5 6V1.4C.5 .8 .9 .5 1.5 .5H5.5C6.1 .5 6.5 .8 6.5 1.4V6" stroke="#333" stroke-width=".9"/><path d="M2 6V3.4H5V6" stroke="#333" stroke-width=".7"/></svg>
<div class="a" style="left:901.9px;top:443.3px;width:30px;height:3.8px;overflow:hidden"><div class="t" style="left:0;top:0;font-size:7px;letter-spacing:.2px;color:#222">Basico</div></div>
<div class="a" style="left:880px;top:447.1px;width:92px;height:10px;background:#c8c8c8;"></div>
<svg style="left:1005.4px;top:449.4px;" width="3.2" height="5.4" viewBox="0 0 3.2 5.4"><path d="M.3 0L3 2.7L.3 5.4" stroke="#333" stroke-width="1"/></svg>
<svg style="left:968.3px;top:466.8px;" width="11" height="10.8" viewBox="0 0 11 10.8"><rect x=".5" y=".5" width="8.4" height="7.6" rx=".8" stroke="#333" stroke-width="1"/><rect x="5.4" y="5.2" width="5" height="5" fill="#b5d0f2" stroke="#3f7fd0" stroke-width=".9"/></svg>
<svg style="left:988px;top:465.4px;" width="12" height="12" viewBox="0 0 12 12"><path d="M.6 11V5.4C.6 4.9 .9 4.6 1.4 4.6H4.2C4.8 4.6 4.8 5.2 4.8 6H9.4V11Z" stroke="#333" stroke-width="1" stroke-linejoin="round"/><circle cx="8.6" cy="3.6" r="3" fill="#cfe0f6" stroke="#5b93d8" stroke-width=".8"/><circle cx="8.6" cy="3.6" r="1" fill="#3f7fd0" stroke="none"/></svg>
<svg style="left:1009.4px;top:467.6px;" width="8.4" height="7.6" viewBox="0 0 8.4 7.6"><path d="M0 0L8.4 7.6M8.4 0L0 7.6" stroke="#e8512a" stroke-width="1.3"/></svg>
<div class="a" style="left:852.6px;top:486px;width:171.4px;height:11.2px;background:#dcdcdc;"></div>
<svg style="left:856.6px;top:490.4px;" width="3.6" height="2.4" viewBox="0 0 3.6 2.4"><path d="M0 0H3.6L1.8 2.4Z" fill="#333" stroke="none"/></svg>
<div class="t" style="left:865.70px;top:488.47px;font-size:7px;letter-spacing:0.009px;color:#222;">Propiedades</div>
<svg style="left:854.6px;top:503px;" width="8" height="6.6" viewBox="0 0 8 6.6"><path d="M.5 6.1V1.2C.5 .7 .8 .5 1.2 .5H2.8C3.4 .5 3.4 1 3.4 1.8H6.8C7.3 1.8 7.5 2.1 7.5 2.6V6.1Z" stroke="#333" stroke-width=".9" stroke-linejoin="round"/></svg>
<div class="t" style="left:867.50px;top:503.07px;font-size:7px;letter-spacing:-0.280px;color:#222;">0.</div>
<div class="a" style="left:905.2px;top:500.3px;width:117.2px;height:12.4px;background:#fff;border:1px solid #9c9c9c;"></div>
<div class="t" style="left:907.60px;top:503.07px;font-size:7px;letter-spacing:-0.209px;color:#222;">Planta Baja</div>
<div class="a" style="left:853.2px;top:514.4px;width:169.2px;height:14.2px;background:#e1e1e1;border:1px solid #c0c0c0;"></div>
<div class="t" style="left:919.30px;top:518.27px;font-size:7px;letter-spacing:-0.094px;color:#222;">Definiciones</div>
<div class="a" style="left:99.5px;top:50px;width:787.4px;height:433.8px;background:#f0f0f0;outline:1px solid #929292;box-shadow:0 2px 9px 1px rgba(0,0,0,.30)"></div>
<div class="a" style="left:99.5px;top:50px;width:787.4px;height:20.3px;background:#fff;"></div>
<div class="a" style="left:426px;top:70.3px;width:5px;height:413px;background:#f4f4f4;"></div>
<svg style="left:104.6px;top:54.8px;" width="10.1" height="10.1" viewBox="0 0 10 10"><path d="M.3 10V2.6C.3 1 1.4 .2 3 .2H9.8V10Z" fill="#eef9fe" stroke="none"/><path d="M.3 10V2.6C.3 1 1.4 .2 3 .2H5.6L7.6 10Z" fill="#2fb8e6" stroke="none"/><path d="M3.4 1L5.2 .6L6.8 10H2.8Z" fill="#5fd2f3" stroke="none"/><path d="M.3 10V3L1.6 1L1.2 10Z" fill="#1b9fd3" stroke="none"/></svg>
<div class="t" style="left:118.30px;top:56.12px;font-size:8.6px;letter-spacing:-0.274px;color:#111;">Administrador de Propiedades</div>
<div class="t" style="left:838.40px;top:56.66px;font-size:8.2px;letter-spacing:0.000px;color:#222;">?</div>
<svg style="left:867.6px;top:57.2px;" width="6.4" height="6.4" viewBox="0 0 6.4 6.4"><path d="M0 0L6.6 6.6M6.6 0L0 6.6" stroke="#222" stroke-width=".9"/></svg>
<div class="a" style="left:108.3px;top:79.4px;width:14.6px;height:13.4px;background:#cce4f7;"></div>
<svg style="left:110px;top:81px;" width="11" height="9" viewBox="0 0 11 9"><path d="M1.25 1.3V7.7M1.25 4.9H4.4M1.25 7.7H4.4" stroke="#333" stroke-width=".8"/><circle cx="1.25" cy="1.3" r=".8" fill="#222" stroke="none"/><circle cx="4.4" cy="4.9" r=".8" fill="#222" stroke="none"/><circle cx="4.4" cy="7.7" r=".8" fill="#222" stroke="none"/><path d="M3.4 1.3H10.6M6 4.9H10.6M6 7.7H10.6" stroke="#222" stroke-width="1.1"/></svg>
<svg style="left:127.5px;top:81px;" width="9.6" height="9.6" viewBox="0 0 9.6 9.6"><circle cx="4.1" cy="3.8" r="3.3" stroke="#333" stroke-width=".9"/><path d="M6.5 6.2L9.4 8.9" stroke="#333" stroke-width="1"/></svg>
<div class="a" style="left:145.2px;top:79.1px;width:261.4px;height:14.8px;background:#fff;border:1px solid #959595;"></div>
<div class="a" style="left:108.4px;top:99.3px;width:298px;height:343px;background:#fff;"></div>
<div class="a" style="left:108.4px;top:111.4px;width:298px;height:13.4px;background:#f0f0f0;"></div>
<div class="a" style="left:212.2px;top:99.3px;width:0.8px;height:12.1px;background:#e6e6e6;"></div>
<div class="a" style="left:300.4px;top:99.3px;width:0.8px;height:12.1px;background:#e6e6e6;"></div>
<div class="a" style="left:389.2px;top:99.3px;width:1px;height:12.1px;background:#e6e6e6;"></div>
<div class="a" style="left:405.4px;top:99.3px;width:1.2px;height:12.1px;background:#f0f0f0;"></div>
<div class="t" style="left:126.00px;top:102.07px;font-size:7px;letter-spacing:0.118px;color:#222;">Nombre</div>
<div class="t" style="left:213.80px;top:102.07px;font-size:7px;letter-spacing:0.011px;color:#222;">Tipo</div>
<div class="t" style="left:301.80px;top:102.07px;font-size:7px;letter-spacing:-0.010px;color:#222;">Omisión</div>
<svg style="left:115.4px;top:116.4px;" width="3.8" height="2.6" viewBox="0 0 3.8 2.6"><path d="M0 0H3.8L1.9 2.6Z" fill="#333" stroke="none"/></svg>
<div class="t" style="left:125.00px;top:115.07px;font-size:7px;letter-spacing:-0.026px;color:#111;font-weight:bold;">Iluminación</div>
<svg style="left:394px;top:113.9px;" width="7.8" height="7" viewBox="0 0 7.8 7"><path d="M3.9 0V7M0 3.5H7.8" stroke="#222" stroke-width=".65"/></svg>
<svg style="left:409px;top:115.2px;" width="6.2" height="3.4" viewBox="0 0 6.2 3.4"><path d="M0 3.4L3.1 .4L6.2 3.4" stroke="#c9cbdb" stroke-width="1.3"/></svg>
<svg style="left:409px;top:434.4px;" width="6.2" height="3.4" viewBox="0 0 6.2 3.4"><path d="M0 0L3.1 3L6.2 0" stroke="#cfcfcf" stroke-width="1.3"/></svg>
<div class="a" style="left:108.4px;top:124.8px;width:298px;height:12.9px;background:#0578d6;"></div>
<svg style="left:115.2px;top:128.7px;" width="3.4" height="5.4" viewBox="0 0 3.4 5.4"><path d="M0 2L1.7 0L3.4 2ZM0 3.4L1.7 5.4L3.4 3.4Z" fill="#0a2a55" stroke="none"/></svg>
<div class="t" style="left:126.00px;top:127.97px;font-size:7px;letter-spacing:-0.111px;color:#fff;">Coeficiente</div>
<div class="t" style="left:213.80px;top:127.97px;font-size:7px;letter-spacing:0.118px;color:#fff;">Número</div>
<div class="t" style="left:301.80px;top:127.97px;font-size:7px;letter-spacing:0.172px;color:#fff;">&lt;Indefinido&gt;</div>
<svg style="left:115.2px;top:141.7px;" width="3.4" height="5.4" viewBox="0 0 3.4 5.4"><path d="M0 2L1.7 0L3.4 2ZM0 3.4L1.7 5.4L3.4 3.4Z" fill="#222" stroke="none"/></svg>
<div class="t" style="left:126.00px;top:141.07px;font-size:7px;letter-spacing:-0.079px;color:#222;">Necesario</div>
<div class="t" style="left:213.80px;top:141.07px;font-size:7px;letter-spacing:-0.096px;color:#222;">Área</div>
<div class="t" style="left:301.80px;top:141.07px;font-size:7px;letter-spacing:0.027px;color:#222;">&lt;Expresión&gt;</div>
<div class="a" style="left:108.4px;top:150.6px;width:298px;height:0.7px;background:#f0f0f0;"></div>
<div class="a" style="left:108.2px;top:447.4px;width:8.4px;height:8.4px;background:#fff;border:1px solid #555;"></div>
<div class="t" style="left:118.80px;top:448.87px;font-size:7px;letter-spacing:0.015px;color:#222;">Mostrar conflictos con Propiedades en los Vínculos</div>
<div class="a" style="left:109px;top:463.4px;width:63.8px;height:14.8px;background:#e1e1e1;border:1px solid #cdcdcd;"></div>
<div class="t" style="left:128.70px;top:467.22px;font-size:7.3px;letter-spacing:-0.348px;color:#222;">Nueva...</div>
<div class="a" style="left:172.5px;top:463.4px;width:15px;height:14.8px;background:#e1e1e1;border:1px solid #cdcdcd;"></div>
<svg style="left:177.6px;top:469.6px;" width="4.6" height="2.6" viewBox="0 0 4.6 2.6"><path d="M0 0H4.6L2.3 2.6Z" fill="#333" stroke="none"/></svg>
<div class="a" style="left:196px;top:463.4px;width:78.8px;height:14.8px;background:#e1e1e1;border:1px solid #cdcdcd;"></div>
<div class="t" style="left:225.40px;top:467.22px;font-size:7.3px;letter-spacing:-0.047px;color:#222;">Borrar</div>
<div class="a" style="left:346.1px;top:463.3px;width:14.7px;height:15px;background:#e3e3e3;border:1px solid #cfcfcf;"></div>
<svg style="left:349.5px;top:466.4px;" width="8.6" height="8.6" viewBox="0 0 8.6 8.6"><circle cx="4.3" cy="4.3" r="3.8" stroke="#222" stroke-width=".9"/><path d="M4.3 3.8V6.6M4.3 2V2.9" stroke="#222" stroke-width="1.1"/></svg>
<div class="a" style="left:364.9px;top:463.3px;width:25.9px;height:15px;background:#dfdfdf;border:1px solid #cfcfcf;"></div>
<svg style="left:372px;top:465.6px;" width="11.4" height="10.6" viewBox="0 0 11.4 10.6"><path d="M3.2 .5H8L10.8 3.2V9.8H3.2Z" fill="#e9f1fb" stroke="#35557c" stroke-width=".9" stroke-linejoin="round"/><path d="M8 .5V3.2H10.8" stroke="#35557c" stroke-width=".7"/><path d="M.4 5H6.4M4.8 3.4L6.6 5L4.8 6.6" stroke="#3f7fcf" stroke-width=".9"/></svg>
<div class="a" style="left:392px;top:463.3px;width:24.8px;height:15px;background:#e3e3e3;border:1px solid #cfcfcf;"></div>
<svg style="left:398px;top:465.8px;" width="13" height="10.4" viewBox="0 0 13 10.4"><path d="M.6 .6H4.6L7.6 3.4V9.6H.6Z" fill="#f7f7f7" stroke="#444" stroke-width="1" stroke-linejoin="round"/><path d="M4.6 .6V3.4H7.6" stroke="#444" stroke-width=".7"/><path d="M5 5.4H10.4" stroke="#4f88d2" stroke-width="1"/><path d="M9.6 3.4L12.4 5.4L9.6 7.4Z" fill="#4f88d2" stroke="none"/></svg>
<svg style="left:427.4px;top:76.2px;" width="2.6" height="3.6" viewBox="0 0 2.6 3.6"><path d="M2.6 0V3.6L0 1.8Z" fill="#222" stroke="none"/></svg>
<div class="t" style="left:439.40px;top:79.07px;font-size:7px;letter-spacing:0.077px;color:#222;">Nombre Propiedad:</div>
<div class="t" style="left:845.90px;top:77.07px;font-size:7px;letter-spacing:-0.025px;color:#222;">Editable: 1</div>
<div class="a" style="left:439px;top:89px;width:439.7px;height:16px;background:#fff;border:1px solid #959595;"></div>
<div class="t" style="left:441.80px;top:94.07px;font-size:7px;letter-spacing:-0.111px;color:#222;">Coeficiente</div>
<div class="t" style="left:439.40px;top:113.27px;font-size:7px;letter-spacing:-0.043px;color:#222;">Descripción:</div>
<div class="a" style="left:439px;top:126px;width:439.7px;height:29.6px;background:#fff;border:1px solid #959595;"></div>
<div class="a" style="left:868.6px;top:127px;width:9.1px;height:27.6px;background:#f0f0f0;"></div>
<svg style="left:870.6px;top:131.6px;" width="5.4" height="3" viewBox="0 0 5.4 3"><path d="M0 3L2.7 .3L5.4 3" stroke="#cbcbcb" stroke-width="1.3"/></svg>
<svg style="left:870.6px;top:146.8px;" width="5.4" height="3" viewBox="0 0 5.4 3"><path d="M0 0L2.7 2.7L5.4 0" stroke="#cbcbcb" stroke-width="1.3"/></svg>
<div class="a" style="left:439px;top:164px;width:439.7px;height:13.7px;background:#d9d9d9;border-radius:2px;"></div>
<svg style="left:444px;top:169.6px;" width="3.6" height="2.4" viewBox="0 0 3.6 2.4"><path d="M0 0H3.6L1.8 2.4Z" fill="#333" stroke="none"/></svg>
<div class="t" style="left:453.00px;top:167.67px;font-size:7px;letter-spacing:-0.159px;color:#111;font-weight:bold;">DEFINICIÓN DEL VALOR</div>
<div class="t" style="left:443.70px;top:187.97px;font-size:7px;letter-spacing:0.063px;color:#222;">Tipo dato:</div>
<div class="a" style="left:527.4px;top:184.9px;width:10.4px;height:11.2px;background:#e6e6e6;border:1px solid #d4d4d4;"></div>
<svg style="left:528.4px;top:186.3px;" width="8.4" height="8.4" viewBox="0 0 8.4 8.4"><circle cx="4.2" cy="4.2" r="3.8" stroke="#333" stroke-width=".8"/><path d="M4.2 3.6V6.4M4.2 2V2.8" stroke="#333" stroke-width="1"/></svg>
<div class="a" style="left:539.8px;top:184.1px;width:335.2px;height:15.5px;background:#fff;border:1px solid #959595;"></div>
<div class="t" style="left:545.40px;top:188.87px;font-size:7px;letter-spacing:0.118px;color:#222;">Número</div>
<svg style="left:866.6px;top:190.2px;" width="5" height="3" viewBox="0 0 5 3"><path d="M0 0L2.5 2.6L5 0" stroke="#666" stroke-width=".8"/></svg>
<div class="t" style="left:443.70px;top:207.57px;font-size:7px;letter-spacing:-0.015px;color:#222;">Valor Por Defecto:</div>
<div class="a" style="left:756px;top:203px;width:119px;height:15px;background:#cfcfcf;border:1px solid #c4c4c4;"></div>
<div class="t" style="left:787.00px;top:206.92px;font-size:7.3px;letter-spacing:-0.160px;color:#a0a0a0;">Definir Opciones...</div>
<svg style="left:453.2px;top:222.3px;" width="8.2" height="8.2" viewBox="0 0 8.2 8.2"><circle cx="4.1" cy="4.1" r="3.6" stroke="#333" stroke-width=".8" fill="#fff"/><circle cx="4.1" cy="4.1" r="2.1" fill="#222" stroke="none"/></svg>
<div class="t" style="left:463.40px;top:223.07px;font-size:7px;letter-spacing:-0.086px;color:#222;">Indefinido</div>
<svg style="left:453.2px;top:237.8px;" width="8.2" height="8.2" viewBox="0 0 8.2 8.2"><circle cx="4.1" cy="4.1" r="3.6" stroke="#333" stroke-width=".8" fill="#fff"/></svg>
<div class="t" style="left:463.40px;top:238.57px;font-size:7px;letter-spacing:-0.064px;color:#222;">Valor</div>
<svg style="left:453.2px;top:253.4px;" width="8.2" height="8.2" viewBox="0 0 8.2 8.2"><circle cx="4.1" cy="4.1" r="3.6" stroke="#333" stroke-width=".8" fill="#fff"/></svg>
<div class="t" style="left:463.40px;top:254.17px;font-size:7px;letter-spacing:-0.125px;color:#222;">Expresión</div>
<div class="a" style="left:539.8px;top:233.7px;width:335.2px;height:14.4px;background:#f0f0f0;border:1px solid #d2d2d2;"></div>
<div class="t" style="left:543.40px;top:238.07px;font-size:7px;letter-spacing:-0.056px;color:#8a8a8a;">0,00</div>
<div class="a" style="left:443.2px;top:267.8px;width:419.6px;height:149.2px;background:#fff;"></div>
<div class="a" style="left:862.8px;top:267.8px;width:12.2px;height:13px;background:#f0f0f0;"></div>
<div class="a" style="left:846.2px;top:267.8px;width:0.8px;height:13px;background:#f1f1f1;"></div>
<div class="t" style="left:460.50px;top:271.47px;font-size:7px;letter-spacing:-0.243px;color:#222;">Secuencia</div>
<svg style="left:866.8px;top:284.4px;" width="5.4" height="3.2" viewBox="0 0 5.4 3.2"><path d="M0 3.2L2.7 .4L5.4 3.2" stroke="#cbcbcb" stroke-width="1.3"/></svg>
<svg style="left:866.8px;top:410px;" width="5.4" height="3.2" viewBox="0 0 5.4 3.2"><path d="M0 0L2.7 2.8L5.4 0" stroke="#cbcbcb" stroke-width="1.3"/></svg>
<div class="a" style="left:444px;top:423.5px;width:51.7px;height:14px;background:#cfcfcf;border:1px solid #c4c4c4;"></div>
<div class="t" style="left:457.10px;top:426.92px;font-size:7.3px;letter-spacing:-0.142px;color:#a0a0a0;">Añadir...</div>
<div class="a" style="left:500.9px;top:423.5px;width:52px;height:14px;background:#cfcfcf;border:1px solid #c4c4c4;"></div>
<div class="t" style="left:516.90px;top:426.92px;font-size:7.3px;letter-spacing:-0.047px;color:#a0a0a0;">Borrar</div>
<div class="a" style="left:557.6px;top:423.5px;width:52px;height:14px;background:#cfcfcf;border:1px solid #c4c4c4;"></div>
<div class="t" style="left:571.85px;top:426.92px;font-size:7.3px;letter-spacing:-0.139px;color:#a0a0a0;">Editar...</div>
<div class="a" style="left:785.9px;top:423.5px;width:89.1px;height:14px;background:#cfcfcf;border:1px solid #c4c4c4;"></div>
<div class="t" style="left:816.60px;top:426.92px;font-size:7.3px;letter-spacing:-0.273px;color:#a0a0a0;">Evaluar...</div>
<div class="a" style="left:439px;top:446.9px;width:439.7px;height:10.2px;background:#d9d9d9;border-radius:2px;"></div>
<svg style="left:444.6px;top:450px;" width="2.4" height="3.6" viewBox="0 0 2.4 3.6"><path d="M0 0V3.6L2.4 1.8Z" fill="#333" stroke="none"/></svg>
<div class="t" style="left:453.00px;top:448.77px;font-size:7px;letter-spacing:-0.248px;color:#111;font-weight:bold;">DISPONIBILIDAD PARA CLASIFICACIONES</div>
<div class="a" style="left:439px;top:459.2px;width:441px;height:0.8px;background:#d4d4d4;"></div>
<div class="a" style="left:766.2px;top:463.4px;width:52.6px;height:14.9px;background:#e1e1e1;border:1px solid #cdcdcd;"></div>
<div class="t" style="left:779.00px;top:467.27px;font-size:7.3px;letter-spacing:-0.277px;color:#222;">Cancelar</div>
<div class="a" style="left:830.2px;top:463.3px;width:46px;height:15px;background:#e3e3e3;border:1.6px solid #3585d6;box-shadow:inset 0 0 0 1px #cfe3f6;"></div>
<div class="t" style="left:848.40px;top:467.47px;font-size:7px;letter-spacing:-0.257px;color:#222;">OK</div>
<svg style="left:879.4px;top:476.2px;" width="7" height="7" viewBox="0 0 7 7"><path d="M5.6 .6h.9v.9h-.9zM5.6 2.6h.9v.9h-.9zM5.6 4.6h.9v.9h-.9zM3.6 2.6h.9v.9h-.9zM3.6 4.6h.9v.9h-.9zM1.6 4.6h.9v.9h-.9z" fill="#bcbcbc" stroke="none"/></svg>
<svg style="left:124.4px;top:522.2px;" width="10.6" height="10" viewBox="0 0 10.6 10"><circle cx="5.6" cy="4.6" r="3.7" stroke="#333" stroke-width=".9"/><path d="M3 7.4L.8 9.6" stroke="#333" stroke-width="1.1"/><path d="M.4 3.6H4.6M1.8 2.2L.4 3.6L1.8 5" stroke="#333" stroke-width=".8"/></svg>
<svg style="left:140px;top:522.2px;" width="10.6" height="10" viewBox="0 0 10.6 10"><circle cx="4.6" cy="4.6" r="3.7" stroke="#cdcdcd" stroke-width=".9"/><path d="M7.4 7.4L9.6 9.6" stroke="#cdcdcd" stroke-width="1.1"/><path d="M5 3.6H9.6M8.2 2.2L9.6 3.6L8.2 5" stroke="#cdcdcd" stroke-width=".8"/></svg>
<svg style="left:154.4px;top:522.3px;" width="10" height="10" viewBox="0 0 10 10"><circle cx="4.2" cy="4.2" r="3.5" stroke="#333" stroke-width=".9"/><path d="M6.8 6.8L9.6 9.6" stroke="#333" stroke-width="1.1"/><path d="M4.2 2.4V6M2.4 4.2H6" stroke="#333" stroke-width=".8"/></svg>
<div class="a" style="left:168.6px;top:522px;width:0.8px;height:10.6px;background:#bdbdbd;"></div>
<svg style="left:173.4px;top:522.3px;" width="10" height="10" viewBox="0 0 10 10"><circle cx="4.4" cy="4.4" r="3.5" stroke="#333" stroke-width=".9"/><path d="M7 7L9.6 9.6" stroke="#333" stroke-width="1.1"/><path d="M2.6 3.4V2.6H3.6M5.2 2.6H6.2V3.4M6.2 5.4V6.2H5.2M3.6 6.2H2.6V5.4" stroke="#333" stroke-width=".7"/></svg>
<div class="t" style="left:205.40px;top:523.96px;font-size:6.9px;letter-spacing:-0.362px;color:#222;">343%</div>
<svg style="left:241.8px;top:525.1px;" width="2.6" height="4" viewBox="0 0 2.6 4"><path d="M0 0V4L2.6 2Z" fill="#222" stroke="none"/></svg>
<div class="a" style="left:248.1px;top:522px;width:0.8px;height:10.6px;background:#bdbdbd;"></div>
<svg style="left:254px;top:523.1px;" width="9.4" height="8.4" viewBox="0 0 9.4 8.4"><path d="M.6 5L3.4 1.4L6.6 3L4.2 7Z" stroke="#333" stroke-width=".9" stroke-linejoin="round"/><path d="M6 7.6C8 7.6 9 6 8.6 4.4M7.6 5L8.6 4.2L9.4 5.4" stroke="#333" stroke-width=".7"/></svg>
<div class="t" style="left:285.00px;top:523.96px;font-size:6.9px;letter-spacing:-0.237px;color:#222;">0,00°</div>
<svg style="left:320.8px;top:525.1px;" width="2.6" height="4" viewBox="0 0 2.6 4"><path d="M0 0V4L2.6 2Z" fill="#222" stroke="none"/></svg>
<div class="a" style="left:327.1px;top:522px;width:0.8px;height:10.6px;background:#bdbdbd;"></div>
<svg style="left:332.6px;top:524.9px;" width="9.6" height="4.4" viewBox="0 0 9.6 4.4"><rect x=".5" y=".5" width="8.6" height="3.4" stroke="#333" stroke-width=".9"/><path d="M2.6 .5V2.2M4.8 .5V2.2M7 .5V2.2" stroke="#333" stroke-width=".7"/></svg>
<div class="t" style="left:365.75px;top:523.96px;font-size:6.9px;letter-spacing:-0.153px;color:#222;">1:100</div>
<svg style="left:401.3px;top:525.1px;" width="2.6" height="4" viewBox="0 0 2.6 4"><path d="M0 0V4L2.6 2Z" fill="#222" stroke="none"/></svg>
<div class="a" style="left:407.6px;top:522px;width:0.8px;height:10.6px;background:#bdbdbd;"></div>
<svg style="left:413px;top:522.7px;" width="10" height="9" viewBox="0 0 10 9"><path d="M2.4 1H9.4M1.6 3.2H8.6M2.4 5.4H9.4M1.6 7.6H8.6" stroke="#333" stroke-width="1.1"/><path d="M.6 8.6L2.6 .6" stroke="#333" stroke-width=".7"/></svg>
<div class="t" style="left:431.00px;top:523.96px;font-size:6.9px;letter-spacing:0.021px;color:#222;">Personalizado</div>
<svg style="left:480.8px;top:525.1px;" width="2.6" height="4" viewBox="0 0 2.6 4"><path d="M0 0V4L2.6 2Z" fill="#222" stroke="none"/></svg>
<div class="a" style="left:487.1px;top:522px;width:0.8px;height:10.6px;background:#bdbdbd;"></div>
<svg style="left:493px;top:523.1px;" width="9" height="8.4" viewBox="0 0 9 8.4"><rect x=".5" y=".5" width="8" height="7.4" fill="#626262" stroke="#555" stroke-width=".6"/><path d="M2 2.4L4 5.6L5.4 3L7 5.6" stroke="#e6e6e6" stroke-width=".8"/></svg>
<div class="t" style="left:508.00px;top:523.96px;font-size:6.9px;letter-spacing:0.200px;color:#222;">Modelo Comp...</div>
<svg style="left:561.8px;top:525.1px;" width="2.6" height="4" viewBox="0 0 2.6 4"><path d="M0 0V4L2.6 2Z" fill="#222" stroke="none"/></svg>
<div class="a" style="left:568.1px;top:522px;width:0.8px;height:10.6px;background:#bdbdbd;"></div>
<svg style="left:574.6px;top:522.5px;" width="7" height="10" viewBox="0 0 7 10"><path d="M1 .6V4.2C1 7 6 7 6 4.2V.6" stroke="#333" stroke-width="1"/><path d="M3.5 6.4V9.6" stroke="#333" stroke-width="1"/></svg>
<div class="t" style="left:589.50px;top:523.96px;font-size:6.9px;letter-spacing:-0.158px;color:#222;">03 Planos 1:100</div>
<svg style="left:640.8px;top:525.1px;" width="2.6" height="4" viewBox="0 0 2.6 4"><path d="M0 0V4L2.6 2Z" fill="#222" stroke="none"/></svg>
<div class="a" style="left:646.6px;top:522px;width:0.8px;height:10.6px;background:#bdbdbd;"></div>
<svg style="left:652.6px;top:523.3px;" width="10" height="7.6" viewBox="0 0 10 7.6"><rect x=".5" y=".5" width="9" height="6.6" stroke="#333" stroke-width=".9"/><rect x="2.4" y="2.2" width="5.2" height="3" stroke="#333" stroke-width=".7"/></svg>
<div class="t" style="left:668.50px;top:523.96px;font-size:6.9px;letter-spacing:0.008px;color:#222;">03 Arquitectón...</div>
<svg style="left:721.3px;top:525.1px;" width="2.6" height="4" viewBox="0 0 2.6 4"><path d="M0 0V4L2.6 2Z" fill="#222" stroke="none"/></svg>
<div class="a" style="left:727.6px;top:522px;width:0.8px;height:10.6px;background:#bdbdbd;"></div>
<svg style="left:732.4px;top:522.9px;" width="9.6" height="8.6" viewBox="0 0 9.6 8.6"><rect x=".5" y=".5" width="5.6" height="4.6" stroke="#333" stroke-width=".9"/><rect x="4" y="3.6" width="5.2" height="4.4" fill="#f0f0f0" stroke="#333" stroke-width=".9"/><path d="M5.4 5.2H7.8M5.4 6.6H7.8" stroke="#333" stroke-width=".6"/></svg>
<div class="t" style="left:748.50px;top:523.96px;font-size:6.9px;letter-spacing:-0.060px;color:#222;">Planta Antepro...</div>
<svg style="left:801.3px;top:525.1px;" width="2.6" height="4" viewBox="0 0 2.6 4"><path d="M0 0V4L2.6 2Z" fill="#222" stroke="none"/></svg>
<div class="a" style="left:0px;top:534.4px;width:1024px;height:15px;background:#fbfbfb;"></div>
<div class="a" style="left:0px;top:534px;width:1024px;height:0.6px;background:#e6e6e6;"></div>
<div class="t" style="left:2.20px;top:538.57px;font-size:7.6px;letter-spacing:0.119px;color:#222;">Clic en un Elemento o dibuje un Área de Selección. Pulse Ctrl+Mayús para activar o desactivar la selección de elementos/sub-elementos.</div>
<svg style="left:907.3px;top:537px;" width="10.8" height="9.8" viewBox="0 0 10.8 9.8"><rect x="2.8" y="2.8" width="7.4" height="6.4" stroke="#333" stroke-width="1"/><path d="M.6 6.4V.6H8V2.4" stroke="#333" stroke-width="1"/></svg>
<div class="t" style="left:932.20px;top:537.66px;font-size:8.2px;letter-spacing:0.090px;color:#a9a9a9;">GRAPHISOFT ID</div>
<div class="a" style="left:1007.6px;top:535px;width:0.7px;height:14px;background:#e2e2e2;"></div>
<div class="a" style="left:0px;top:549.3px;width:1024px;height:26.8px;background:#464646;"></div>
<svg style="left:11px;top:557.4px;" width="10.6" height="10.4" viewBox="0 0 10.6 10.4"><path d="M0 1.5L4.4 .9V4.9H0ZM5.2 .8L10.6 0V4.9H5.2ZM0 5.6H4.4V9.6L0 9ZM5.2 5.6H10.6V10.4L5.2 9.7Z" fill="#fff" stroke="none"/></svg>
<svg style="left:42.6px;top:557.4px;" width="10.6" height="10.4" viewBox="0 0 10.6 10.4"><rect x="2" y="2.6" width="5.4" height="5.2" stroke="#eee" stroke-width="1"/><path d="M2 .4V1.6M7.4 .4V1.6M2 8.8V10M7.4 8.8V10M9.6 1V9.4" stroke="#eee" stroke-width="1"/></svg>
<svg style="left:74.7px;top:556px;" width="14.7" height="12.2" viewBox="0 0 13.4 12"><path d="M.6 1.4H5L6 2.6H12.8V11H.6Z" fill="#f0b93a" stroke="none"/><path d="M.6 4H12.8V11H.6Z" fill="#fbd566" stroke="none"/><rect x="3.2" y="6.2" width="7" height="4.8" fill="#4f9fe2" stroke="none"/><rect x="4.8" y="8" width="3.8" height="3" fill="#d4ecff" stroke="none"/></svg>
<div class="a" style="left:68.8px;top:574px;width:26.8px;height:2px;background:#82b9e8;"></div>
<svg style="left:109.4px;top:557.6px;" width="11.8" height="10.8" viewBox="0 0 13 11"><rect x="0" y="0" width="13" height="11" rx="2" fill="#262626" stroke="none"/><rect x="2" y="1.8" width="9" height="3.2" rx="1.4" fill="#ececec" stroke="none"/><rect x="2" y="6" width="9" height="3.2" rx="1.4" fill="#cfcfcf" stroke="none"/></svg>
<svg style="left:140.8px;top:555.2px;" width="14" height="14" viewBox="0 0 13.4 13.4"><circle cx="6.5" cy="6.5" r="6.3" fill="#e33b2e" stroke="none"/><path d="M6.5 6.5L1 9.6A6.3 6.3 0 0 0 9.6 12Z" fill="#2da94f" stroke="none"/><path d="M6.5 6.5L9.6 12A6.3 6.3 0 0 0 12.2 3.8H6.5Z" fill="#fbc116" stroke="none"/><path d="M6.5 6.5L1 9.6A6.3 6.3 0 0 1 .9 3.6Z" fill="#2da94f" stroke="none"/><circle cx="6.5" cy="6.5" r="2.8" fill="#fff" stroke="none"/><circle cx="6.5" cy="6.5" r="2.2" fill="#3f7fe0" stroke="none"/><rect x="7.4" y="7.6" width="6.4" height="5.4" rx=".8" fill="#2b2b2b" stroke="#888" stroke-width=".4"/><circle cx="10.6" cy="10.3" r="1.5" fill="#e8e8e8" stroke="none"/></svg>
<div class="a" style="left:135px;top:574px;width:27px;height:2px;background:#82b9e8;"></div>
<svg style="left:173.8px;top:555px;" width="15.6" height="14" viewBox="0 0 15.6 14"><rect x=".7" y=".7" width="14.2" height="12.6" rx="2" fill="#0b2033" stroke="#2fa3ea" stroke-width="1.1"/></svg>
<div class="t" style="left:176.60px;top:558.38px;font-size:9px;letter-spacing:-0.504px;color:#d6ecff;font-weight:bold;">Ps</div>
<div class="a" style="left:167.8px;top:574px;width:27.4px;height:2px;background:#82b9e8;"></div>
<svg style="left:206.9px;top:555.5px;" width="14.4" height="13.6" viewBox="0 0 14.4 13.6"><path d="M4 .6L13.8 2.2L11 12.8L.6 10.6Z" fill="#8fd0ea" stroke="none"/><path d="M4 .6L13.8 2.2L13 5L3.2 3.2Z" fill="#d9f1fa" stroke="none"/><path d="M.6 10.6L11 12.8L11.5 11L1.2 8.8Z" fill="#5d8296" stroke="none"/><path d="M5 4.6L12 6L10.6 10.4L3.6 8.8Z" fill="#b5e2f3" stroke="none"/></svg>
<div class="a" style="left:201px;top:574px;width:27px;height:2px;background:#82b9e8;"></div>
<svg style="left:240.5px;top:555.5px;" width="15.6" height="14" viewBox="0 0 15.6 14"><rect x="0" y="0" width="13.4" height="11.4" rx="2" fill="#6f73c8" stroke="none"/><rect x="2.6" y="3" width="7.6" height="4.6" rx="1" fill="#e3e4fb" stroke="none"/><circle cx="11" cy="10.6" r="3.7" fill="#e23f3f" stroke="none"/><circle cx="11" cy="10.6" r="1.5" fill="#fff" stroke="none"/></svg>
<div class="a" style="left:234.2px;top:574px;width:28.8px;height:2px;background:#82b9e8;"></div>
<div class="a" style="left:264.3px;top:549.3px;width:32.7px;height:26.7px;background:#606060;"></div>
<svg style="left:272.9px;top:555px;" width="15.0" height="15.0" viewBox="0 0 10 10"><rect x="0" y="0" width="10" height="10" fill="#9fe2f7" stroke="none"/><path d="M0 0H4.2L1.6 10H0Z" fill="#4ccaf1" stroke="none"/><path d="M5.7 .8L7.9 10H2.3Z" fill="#17abdf" stroke="none"/><path d="M6.6 0H10V10H8.4Z" fill="#e9fafe" stroke="none"/></svg>
<div class="a" style="left:264.3px;top:574px;width:32.9px;height:2px;background:#82b9e8;"></div>
<svg style="left:856.6px;top:561px;" width="6" height="3.6" viewBox="0 0 6 3.6"><path d="M0 3.4L3 .4L6 3.4" stroke="#eee" stroke-width=".9"/></svg>
<svg style="left:870.6px;top:560.4px;" width="9.8" height="5.6" viewBox="0 0 9.8 5.6"><rect x="1.4" y=".5" width="8" height="4.6" rx=".6" fill="#eee" stroke="#eee" stroke-width=".6"/><path d="M.4 1.8V3.8" stroke="#eee" stroke-width=".9"/></svg>
<svg style="left:887.6px;top:558.6px;" width="8.6" height="8.6" viewBox="0 0 8.6 8.6"><path d="M1 8.2A7.2 7.2 0 0 1 8.2 1" stroke="#aaa" stroke-width=".8"/><path d="M3.4 8.2A4.8 4.8 0 0 1 8.2 3.4" stroke="#aaa" stroke-width=".8"/><path d="M5.8 8.2A2.4 2.4 0 0 1 8.2 5.8" stroke="#ddd" stroke-width=".8"/><circle cx="7.8" cy="7.8" r=".7" fill="#eee" stroke="none"/></svg>
<svg style="left:903.4px;top:559.4px;" width="9.8" height="7.4" viewBox="0 0 9.8 7.4"><path d="M.4 2.6H2L4 .6V6.8L2 4.8H.4Z" fill="none" stroke="#eee" stroke-width=".8" stroke-linejoin="round"/><path d="M5.4 2.4C6 3.2 6 4.2 5.4 5M6.8 1.4C8 2.8 8 4.6 6.8 6M8.2 .4C10 2.4 10 5 8.2 7" stroke="#ccc" stroke-width=".7"/></svg>
<div class="t" style="left:921.50px;top:553.62px;font-size:7.3px;letter-spacing:-0.903px;color:#f4f4f4;">ESP</div>
<div class="t" style="left:923.60px;top:565.62px;font-size:7.3px;letter-spacing:-1.019px;color:#f4f4f4;">ES</div>
<div class="t" style="left:954.90px;top:553.62px;font-size:7.3px;letter-spacing:-0.033px;color:#f4f4f4;">19:36</div>
<div class="t" style="left:944.60px;top:565.62px;font-size:7.3px;letter-spacing:0.347px;color:#f4f4f4;">15/10/2020</div>
<svg style="left:996.6px;top:557.4px;" width="11.4" height="11.4" viewBox="0 0 11.4 11.4"><path d="M.4 .4H10.4V7.2H5.6L3 9.4V7.2H.4Z" fill="#f2f2f2" stroke="none"/><path d="M2 2.4H8.8M2 4.2H8.8" stroke="#777" stroke-width=".7"/><circle cx="10.4" cy="10.8" r="4.2" fill="#3a3a3a" stroke="#d8d8d8" stroke-width=".8"/></svg>
<div class="a" style="left:1020.4px;top:549.4px;width:0.7px;height:26.6px;background:#6a6a6a;"></div>
<div class="t" style="left:1003.60px;top:565.66px;font-size:5.6px;letter-spacing:-0.300px;color:#fff;">10</div>
</div></body></html>
